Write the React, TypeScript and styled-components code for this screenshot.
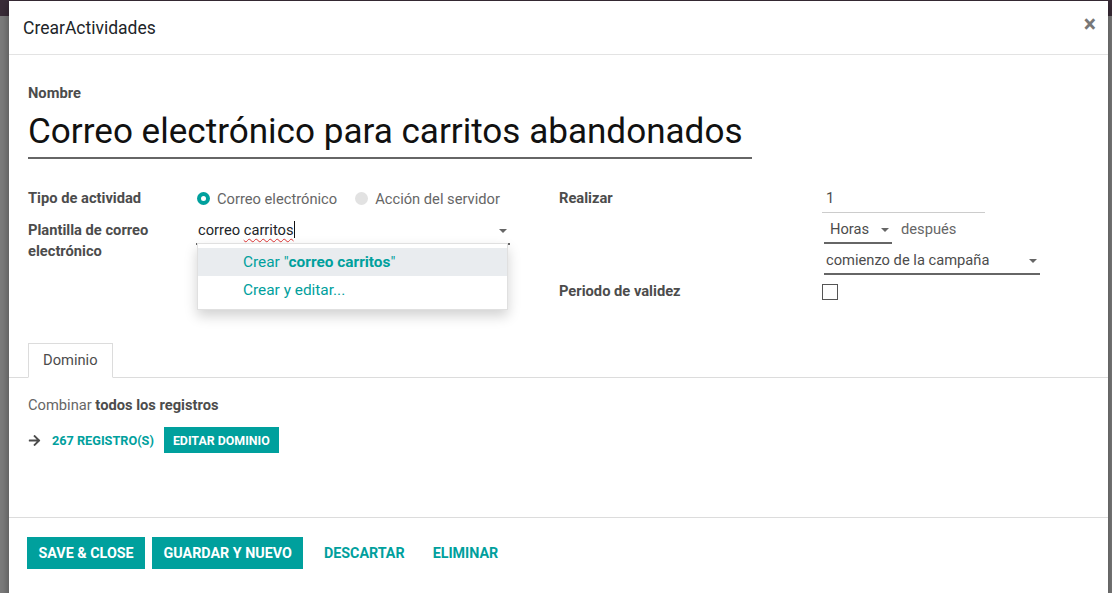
import React from "react";
import styled, { createGlobalStyle } from "styled-components";
import { FaArrowRight } from "react-icons/fa";

const TEAL = "#00A09D";
const FONT = `Roboto, "Liberation Sans", Arial, sans-serif`;
const FS = 14.7;

const GlobalStyle = createGlobalStyle`
  html, body { margin: 0; padding: 0; }
  body {
    background: linear-gradient(to bottom, #3a2c38 0, #3a2c38 16px, #7c7c7c 16px);
    font-family: ${FONT};
    overflow: hidden;
  }
  * { box-sizing: border-box; }
`;

const Screen = styled.div`
  height: 593px;
  padding: 1px 4px 0 9px;
  overflow: hidden;
`;

const Modal = styled.div`
  background: #fff;
  height: 640px;
  display: flex;
  flex-direction: column;
  box-shadow: 0 3px 9px rgba(0, 0, 0, 0.4);
`;

const Header = styled.header`
  flex: none;
  height: 54px;
  display: flex;
  align-items: center;
  justify-content: space-between;
  padding: 0 12px 0 14px;
  border-bottom: 1px solid #e3e3e3;
`;

const Title = styled.h4`
  margin: 0;
  font-size: 17.5px;
  font-weight: 400;
  color: #212529;
`;

const Close = styled.span`
  font-size: 23px;
  line-height: 1;
  font-weight: 700;
  color: #777;
  margin-top: -6px;
`;

const Body = styled.div`
  flex: none;
  height: 462px;
  padding-top: 29px;
  display: flex;
  flex-direction: column;
`;

const Sheet = styled.div`
  padding: 0 19px;
`;

const NameLabel = styled.div`
  font-size: ${FS}px;
  font-weight: 700;
  line-height: 18px;
  color: #4c4c4c;
  margin-bottom: 9px;
`;

const NameInput = styled.div`
  width: 724px;
  font-size: 35.1px;
  line-height: 40px;
  color: #111;
  padding-bottom: 6px;
  border-bottom: 2px solid #666;
`;

const FormRow = styled.div`
  display: flex;
  margin-top: 29px;
`;

const Group = styled.div<{ $cols: string; $gap: number }>`
  display: grid;
  grid-template-columns: ${(p) => p.$cols};
  grid-auto-rows: 25px;
  row-gap: ${(p) => p.$gap}px;
  align-items: start;
`;

const RightGroup = styled(Group)`
  margin-left: 49px;
`;

const Label = styled.div`
  font-size: ${FS}px;
  font-weight: 700;
  line-height: 21px;
  color: #4c4c4c;
  white-space: nowrap;
`;

const Radios = styled.div`
  display: flex;
  align-items: center;
  height: 21px;
  font-size: ${FS}px;
  color: #666;
  white-space: nowrap;
`;

const Radio = styled.span<{ $on?: boolean }>`
  width: 13px;
  height: 13px;
  border-radius: 50%;
  background: ${(p) => (p.$on ? TEAL : "#e2e2e2")};
  display: inline-flex;
  align-items: center;
  justify-content: center;
  margin: 0 7px 0 ${(p) => (p.$on ? 1 : 18)}px;
  &::after {
    content: "";
    width: 5px;
    height: 5px;
    border-radius: 50%;
    background: ${(p) => (p.$on ? "#fff" : "transparent")};
  }
`;

const FieldBox = styled.div<{ $w: number; $ml?: number; $pl?: number; $light?: boolean }>`
  position: relative;
  width: ${(p) => p.$w}px;
  height: 25px;
  margin-left: ${(p) => p.$ml ?? 0}px;
  padding-left: ${(p) => p.$pl ?? 0}px;
  font-size: ${FS}px;
  line-height: 21px;
  color: #4c4c4c;
  white-space: nowrap;
  border-bottom: ${(p) => (p.$light ? "1px solid #ccc" : "2px solid #666")};
  flex: none;
`;

const InputText = styled.span`
  color: #212529;
`;

const Misspelled = styled.span`
  text-decoration: underline wavy #d33;
  text-decoration-thickness: 1px;
  text-underline-offset: 3px;
`;

const Cursor = styled.span`
  display: inline-block;
  width: 1px;
  height: 17px;
  background: #111;
  vertical-align: -3px;
`;

const Caret = styled.span`
  position: absolute;
  right: 3px;
  top: 9px;
  width: 0;
  height: 0;
  border-left: 4px solid transparent;
  border-right: 4px solid transparent;
  border-top: 4px solid #666;
`;

const Dropdown = styled.ul`
  position: absolute;
  top: 100%;
  left: 1px;
  right: 2px;
  margin: 0;
  padding: 4px 0 5px;
  list-style: none;
  background: #fff;
  border: 1px solid rgba(0, 0, 0, 0.12);
  box-shadow: 0 6px 12px rgba(0, 0, 0, 0.18);
  z-index: 2;
`;

const Option = styled.li<{ $active?: boolean }>`
  height: 28px;
  line-height: 29px;
  padding-left: 45px;
  font-size: 15.4px;
  color: ${TEAL};
  background: ${(p) => (p.$active ? "#e9ecef" : "transparent")};
  b { font-weight: 700; }
`;

const Inline = styled.div`
  display: flex;
  align-items: flex-start;
`;

const After = styled.span`
  font-size: ${FS}px;
  line-height: 21px;
  color: #666;
  margin-left: 9px;
`;

const Checkbox = styled.span`
  display: block;
  width: 16px;
  height: 16px;
  margin-top: 3px;
  border: 1px solid #555;
  background: #fff;
`;

const TabList = styled.div`
  display: flex;
  margin-top: 37px;
  padding-left: 19px;
  border-bottom: 1px solid #dcdcdc;
`;

const Tab = styled.div`
  height: 35px;
  margin-bottom: -1px;
  padding: 0 14px;
  border: 1px solid #dcdcdc;
  border-bottom-color: #fff;
  background: #fff;
  font-size: ${FS}px;
  line-height: 32px;
  color: #4c4c4c;
`;

const Domain = styled.div`
  padding: 17px 19px 0;
`;

const Combine = styled.div`
  font-size: ${FS}px;
  line-height: 21px;
  color: #666;
  b { color: #4c4c4c; font-weight: 700; }
`;

const DomainActions = styled.div`
  display: flex;
  align-items: center;
  margin-top: 11px;
  color: #4c4c4c;
`;

const Count = styled.span`
  margin-left: 11px;
  font-size: 12.7px;
  font-weight: 700;
  color: ${TEAL};
`;

const SmallButton = styled.span`
  margin-left: 10px;
  height: 26px;
  padding: 0 9px;
  display: inline-flex;
  align-items: center;
  background: ${TEAL};
  color: #fff;
  font-size: 12.4px;
  font-weight: 700;
`;

const Footer = styled.footer`
  flex: none;
  border-top: 1px solid #dcdcdc;
  padding: 19px 0 0 18px;
  display: flex;
  gap: 7px;
`;

const LinkActions = styled.div`
  display: flex;
  gap: 7px;
  margin-left: 3px;
`;

const Button = styled.span<{ $primary?: boolean }>`
  height: 32px;
  padding: 0 ${(p) => (p.$primary ? 11.5 : 10.5)}px;
  display: inline-flex;
  align-items: center;
  font-size: 14.3px;
  font-weight: 700;
  text-transform: uppercase;
  background: ${(p) => (p.$primary ? TEAL : "transparent")};
  color: ${(p) => (p.$primary ? "#fff" : TEAL)};
`;

export default function App() {
  return (
    <>
      <GlobalStyle />
      <Screen>
        <Modal>
          <Header>
            <Title>CrearActividades</Title>
            <Close>×</Close>
          </Header>
          <Body>
            <Sheet>
              <NameLabel>Nombre</NameLabel>
              <NameInput>Correo electrónico para carritos abandonados</NameInput>
              <FormRow>
                <Group $cols="168px 314px" $gap={7}>
                  <Label>Tipo de actividad</Label>
                  <Radios>
                    <Radio $on />
                    Correo electrónico
                    <Radio />
                    Acción del servidor
                  </Radios>
                  <Label>
                    Plantilla de correo
                    <br />
                    electrónico
                  </Label>
                  <FieldBox $w={314} $pl={2}>
                    <InputText>
                      correo <Misspelled>carritos</Misspelled>
                    </InputText>
                    <Cursor />
                    <Caret />
                    <Dropdown>
                      <Option $active>
                        Crear "<b>correo carritos</b>"
                      </Option>
                      <Option>Crear y editar...</Option>
                    </Dropdown>
                  </FieldBox>
                </Group>
                <RightGroup $cols="263px 218px" $gap={6}>
                  <Label>Realizar</Label>
                  <FieldBox $w={163} $pl={4} $light>
                    1
                  </FieldBox>
                  <span />
                  <Inline>
                    <FieldBox $w={68} $ml={2} $pl={6}>
                      Horas
                      <Caret />
                    </FieldBox>
                    <After>después</After>
                  </Inline>
                  <span />
                  <FieldBox $w={216} $ml={2} $pl={2}>
                    comienzo de la campaña
                    <Caret />
                  </FieldBox>
                  <Label>Periodo de validez</Label>
                  <Checkbox />
                </RightGroup>
              </FormRow>
            </Sheet>
            <TabList>
              <Tab>Dominio</Tab>
            </TabList>
            <Domain>
              <Combine>
                Combinar <b>todos los registros</b>
              </Combine>
              <DomainActions>
                <FaArrowRight size={13} />
                <Count>267 REGISTRO(S)</Count>
                <SmallButton>EDITAR DOMINIO</SmallButton>
              </DomainActions>
            </Domain>
          </Body>
          <Footer>
            <Button $primary>Save &amp; Close</Button>
            <Button $primary>Guardar y nuevo</Button>
            <LinkActions>
              <Button>Descartar</Button>
              <Button>Eliminar</Button>
            </LinkActions>
          </Footer>
        </Modal>
      </Screen>
    </>
  );
}
